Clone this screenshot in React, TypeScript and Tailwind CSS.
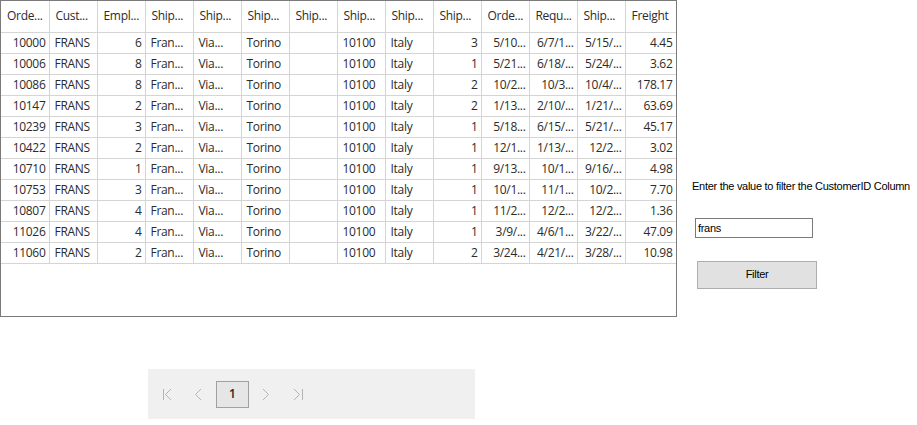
import React from 'react';

const headers = ['Orde...', 'Cust...', 'Empl...', 'Ship...', 'Ship...', 'Ship...', 'Ship...', 'Ship...', 'Ship...', 'Ship...', 'Orde...', 'Requ...', 'Ship...', 'Freight'];

// r = right aligned, l = left aligned
const align = ['r', 'l', 'r', 'l', 'l', 'l', 'l', 'l', 'l', 'r', 'r', 'r', 'r', 'r'];

const orders = [
  ['10000', '6', '3', '5/10...', '6/7/1...', '5/15/...', '4.45'],
  ['10006', '8', '1', '5/21...', '6/18/...', '5/24/...', '3.62'],
  ['10086', '8', '2', '10/2...', '10/3...', '10/4/...', '178.17'],
  ['10147', '2', '2', '1/13...', '2/10/...', '1/21/...', '63.69'],
  ['10239', '3', '1', '5/18...', '6/15/...', '5/21/...', '45.17'],
  ['10422', '2', '1', '12/1...', '1/13/...', '12/2...', '3.02'],
  ['10710', '1', '1', '9/13...', '10/1...', '9/16/...', '4.98'],
  ['10753', '3', '1', '10/1...', '11/1...', '10/2...', '7.70'],
  ['10807', '4', '1', '11/2...', '12/2...', '12/2...', '1.36'],
  ['11026', '4', '1', '3/9/...', '4/6/1...', '3/22/...', '47.09'],
  ['11060', '2', '2', '3/24...', '4/21/...', '3/28/...', '10.98'],
];

const rows = orders.map(([id, emp, via, od, rd, sd, fr]) => [
  id, 'FRANS', emp, 'Fran...', 'Via...', 'Torino', '', '10100', 'Italy', via, od, rd, sd, fr,
]);

function PagerIcon({ kind }: { kind: 'first' | 'prev' | 'next' | 'last' }) {
  return (
    <svg width="12" height="13" viewBox="0 0 12 13" fill="none" stroke="#b4b4b4" strokeWidth="1">
      {kind === 'first' && (
        <>
          <line x1="1.5" y1="1" x2="1.5" y2="12" />
          <polyline points="9,1 3.5,6.5 9,12" />
        </>
      )}
      {kind === 'prev' && <polyline points="8,1 2.5,6.5 8,12" />}
      {kind === 'next' && <polyline points="3,1 8.5,6.5 3,12" />}
      {kind === 'last' && (
        <>
          <polyline points="2,1 7.5,6.5 2,12" />
          <line x1="10.5" y1="1" x2="10.5" y2="12" />
        </>
      )}
    </svg>
  );
}

export default function App() {
  return (
    <div className="w-[917px] h-[425px] bg-white text-[#2b2b2b] overflow-hidden" style={{ fontFamily: '"Open Sans", "Noto Sans", sans-serif' }}>
      <div className="flex">
        <div className="w-[677px] h-[317px] border border-[#7a7a7a] bg-white overflow-hidden">
          <table className="table-fixed border-collapse w-[675px] text-[12px]">
            <colgroup>
              {headers.map((_, i) => (
                <col key={i} className={i === 13 ? 'w-[51px]' : 'w-[48px]'} />
              ))}
            </colgroup>
            <thead>
              <tr className="h-[31px]">
                {headers.map((h, i) => (
                  <th key={i} className="border-r border-b border-[#d5d5d5] px-[6px] font-normal text-left whitespace-nowrap overflow-hidden tracking-[-0.3px]">
                    {h}
                  </th>
                ))}
              </tr>
            </thead>
            <tbody>
              {rows.map((r, ri) => (
                <tr key={ri} className="h-[21px]">
                  {r.map((c, ci) => (
                    <td
                      key={ci}
                      className={`border-r border-b border-[#d5d5d5] whitespace-nowrap overflow-hidden p-0 tracking-[-0.3px] ${align[ci] === 'r' ? 'text-right pr-[3px]' : 'text-left pl-[5px]'}`}
                    >
                      {c}
                    </td>
                  ))}
                </tr>
              ))}
            </tbody>
          </table>
        </div>

        <div className="flex flex-col pt-[178px] pl-[15px]" style={{ fontFamily: '"Liberation Sans", Arial, sans-serif' }}>
          <div className="text-[11px] text-black tracking-[-0.28px] whitespace-nowrap">Enter the value to filter the CustomerID Column</div>
          <div className="mt-[23px] ml-[3px] w-[118px] h-[20px] border border-[#7a7a7a] text-[11px] text-black pl-[2px] leading-[18px] tracking-[-0.3px]">frans</div>
          <div className="mt-[23px] ml-[5px] w-[120px] h-[28px] border border-[#adadad] bg-[#e1e1e1] text-[11px] text-black flex items-center justify-center tracking-[-0.3px]">Filter</div>
        </div>
      </div>

      <div className="mt-[52px] ml-[148px] w-[327px] h-[50px] bg-[#f0f0f0] flex items-center pl-[14px]">
        <PagerIcon kind="first" />
        <div className="ml-[19px]"><PagerIcon kind="prev" /></div>
        <div className="ml-[11px] w-[33px] h-[27px] border border-[#a0a0a0] bg-[#e6e6e6] flex items-center justify-center text-[12px] text-[#222] font-semibold">1</div>
        <div className="ml-[11px]"><PagerIcon kind="next" /></div>
        <div className="ml-[20px]"><PagerIcon kind="last" /></div>
      </div>
    </div>
  );
}
